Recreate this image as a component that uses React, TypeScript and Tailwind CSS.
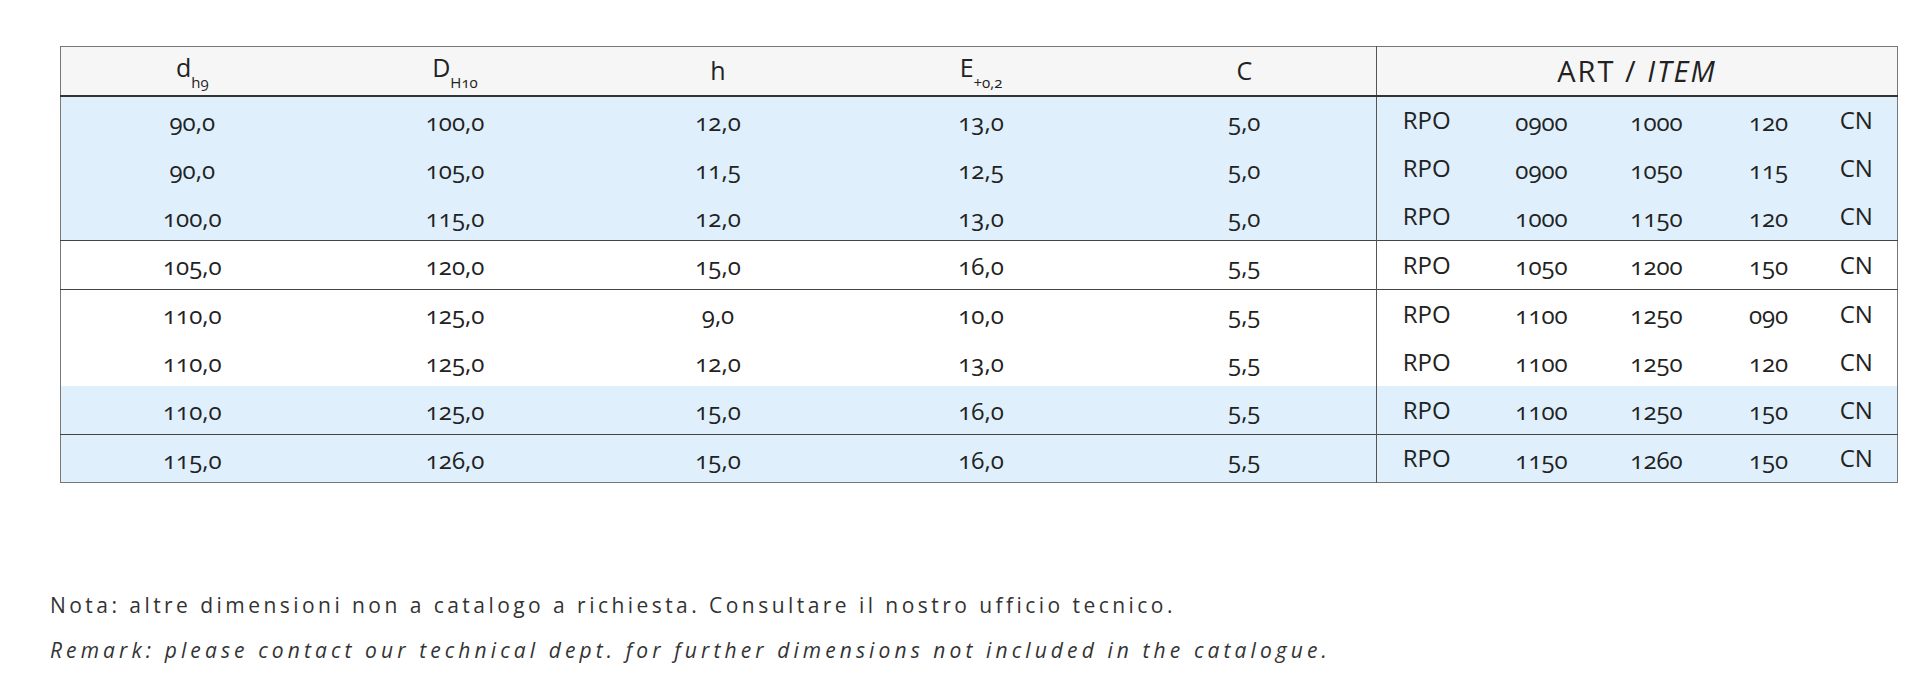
import React from "react"

type Row = { d: string; D: string; h: string; E: string; C: string; art: string[]; blue: boolean; line: boolean }

const rows: Row[] = [
  { d: "90,0", D: "100,0", h: "12,0", E: "13,0", C: "5,0", art: ["RPO", "0900", "1000", "120", "CN"], blue: true, line: false },
  { d: "90,0", D: "105,0", h: "11,5", E: "12,5", C: "5,0", art: ["RPO", "0900", "1050", "115", "CN"], blue: true, line: false },
  { d: "100,0", D: "115,0", h: "12,0", E: "13,0", C: "5,0", art: ["RPO", "1000", "1150", "120", "CN"], blue: true, line: true },
  { d: "105,0", D: "120,0", h: "15,0", E: "16,0", C: "5,5", art: ["RPO", "1050", "1200", "150", "CN"], blue: false, line: true },
  { d: "110,0", D: "125,0", h: "9,0", E: "10,0", C: "5,5", art: ["RPO", "1100", "1250", "090", "CN"], blue: false, line: false },
  { d: "110,0", D: "125,0", h: "12,0", E: "13,0", C: "5,5", art: ["RPO", "1100", "1250", "120", "CN"], blue: false, line: false },
  { d: "110,0", D: "125,0", h: "15,0", E: "16,0", C: "5,5", art: ["RPO", "1100", "1250", "150", "CN"], blue: true, line: true },
  { d: "115,0", D: "126,0", h: "15,0", E: "16,0", C: "5,5", art: ["RPO", "1150", "1260", "150", "CN"], blue: true, line: false },
]

const font = { fontFamily: "'Open Sans', 'Noto Sans', sans-serif" }

export default function App() {
  return (
    <div className="w-[1920px] h-[698px] bg-white pt-[46px] pl-[60px] text-[#222]" style={font}>
      <table className="w-[1837px] table-fixed border-collapse border border-[#777] oldstyle-nums">
        <colgroup>
          <col className="w-[263px]" />
          <col className="w-[263px]" />
          <col className="w-[263px]" />
          <col className="w-[263px]" />
          <col className="w-[264px]" />
          <col className="w-[100px]" />
          <col className="w-[130px]" />
          <col className="w-[100px]" />
          <col className="w-[124px]" />
          <col className="w-[67px]" />
        </colgroup>
        <thead>
          <tr className="h-[49px] bg-[#f6f6f6] border-b-2 border-[#333] text-[25px]">
            <th className="font-normal">
              d<span className="text-[15px] align-[-11px]">h9</span>
            </th>
            <th className="font-normal">
              D<span className="text-[15px] align-[-11px]">H10</span>
            </th>
            <th className="font-normal">h</th>
            <th className="font-normal">
              E<span className="text-[15px] align-[-11px]">+0,2</span>
            </th>
            <th className="font-normal">C</th>
            <th colSpan={5} className="font-normal border-l border-[#555] text-[29px] tracking-[2px]">
              ART / <i>ITEM</i>
            </th>
          </tr>
        </thead>
        <tbody>
          {rows.map((r, i) => (
            <tr
              key={i}
              className={`h-[48.4px] text-[24px] ${r.blue ? "bg-[#dff0fc]" : "bg-white"} ${r.line ? "border-b border-[#444]" : ""}`}
            >
              <td className="text-center pt-[3px]">{r.d}</td>
              <td className="text-center pt-[3px]">{r.D}</td>
              <td className="text-center pt-[3px]">{r.h}</td>
              <td className="text-center pt-[3px]">{r.E}</td>
              <td className="text-center pt-[3px]">{r.C}</td>
              <td className="text-center border-l border-[#555]">{r.art[0]}</td>
              <td className="text-center pt-[3px]">{r.art[1]}</td>
              <td className="text-center pt-[3px]">{r.art[2]}</td>
              <td className="text-center pt-[3px]">{r.art[3]}</td>
              <td className="text-center pr-[15px]">{r.art[4]}</td>
            </tr>
          ))}
        </tbody>
      </table>

      <div className="mt-[100px] -ml-[10px] text-[21px] leading-[45px] text-[#333]">
        <p className="tracking-[3.45px]">Nota: altre dimensioni non a catalogo a richiesta. Consultare il nostro ufficio tecnico.</p>
        <p className="italic tracking-[4.1px]">Remark: please contact our technical dept. for further dimensions not included in the catalogue.</p>
      </div>
    </div>
  )
}
